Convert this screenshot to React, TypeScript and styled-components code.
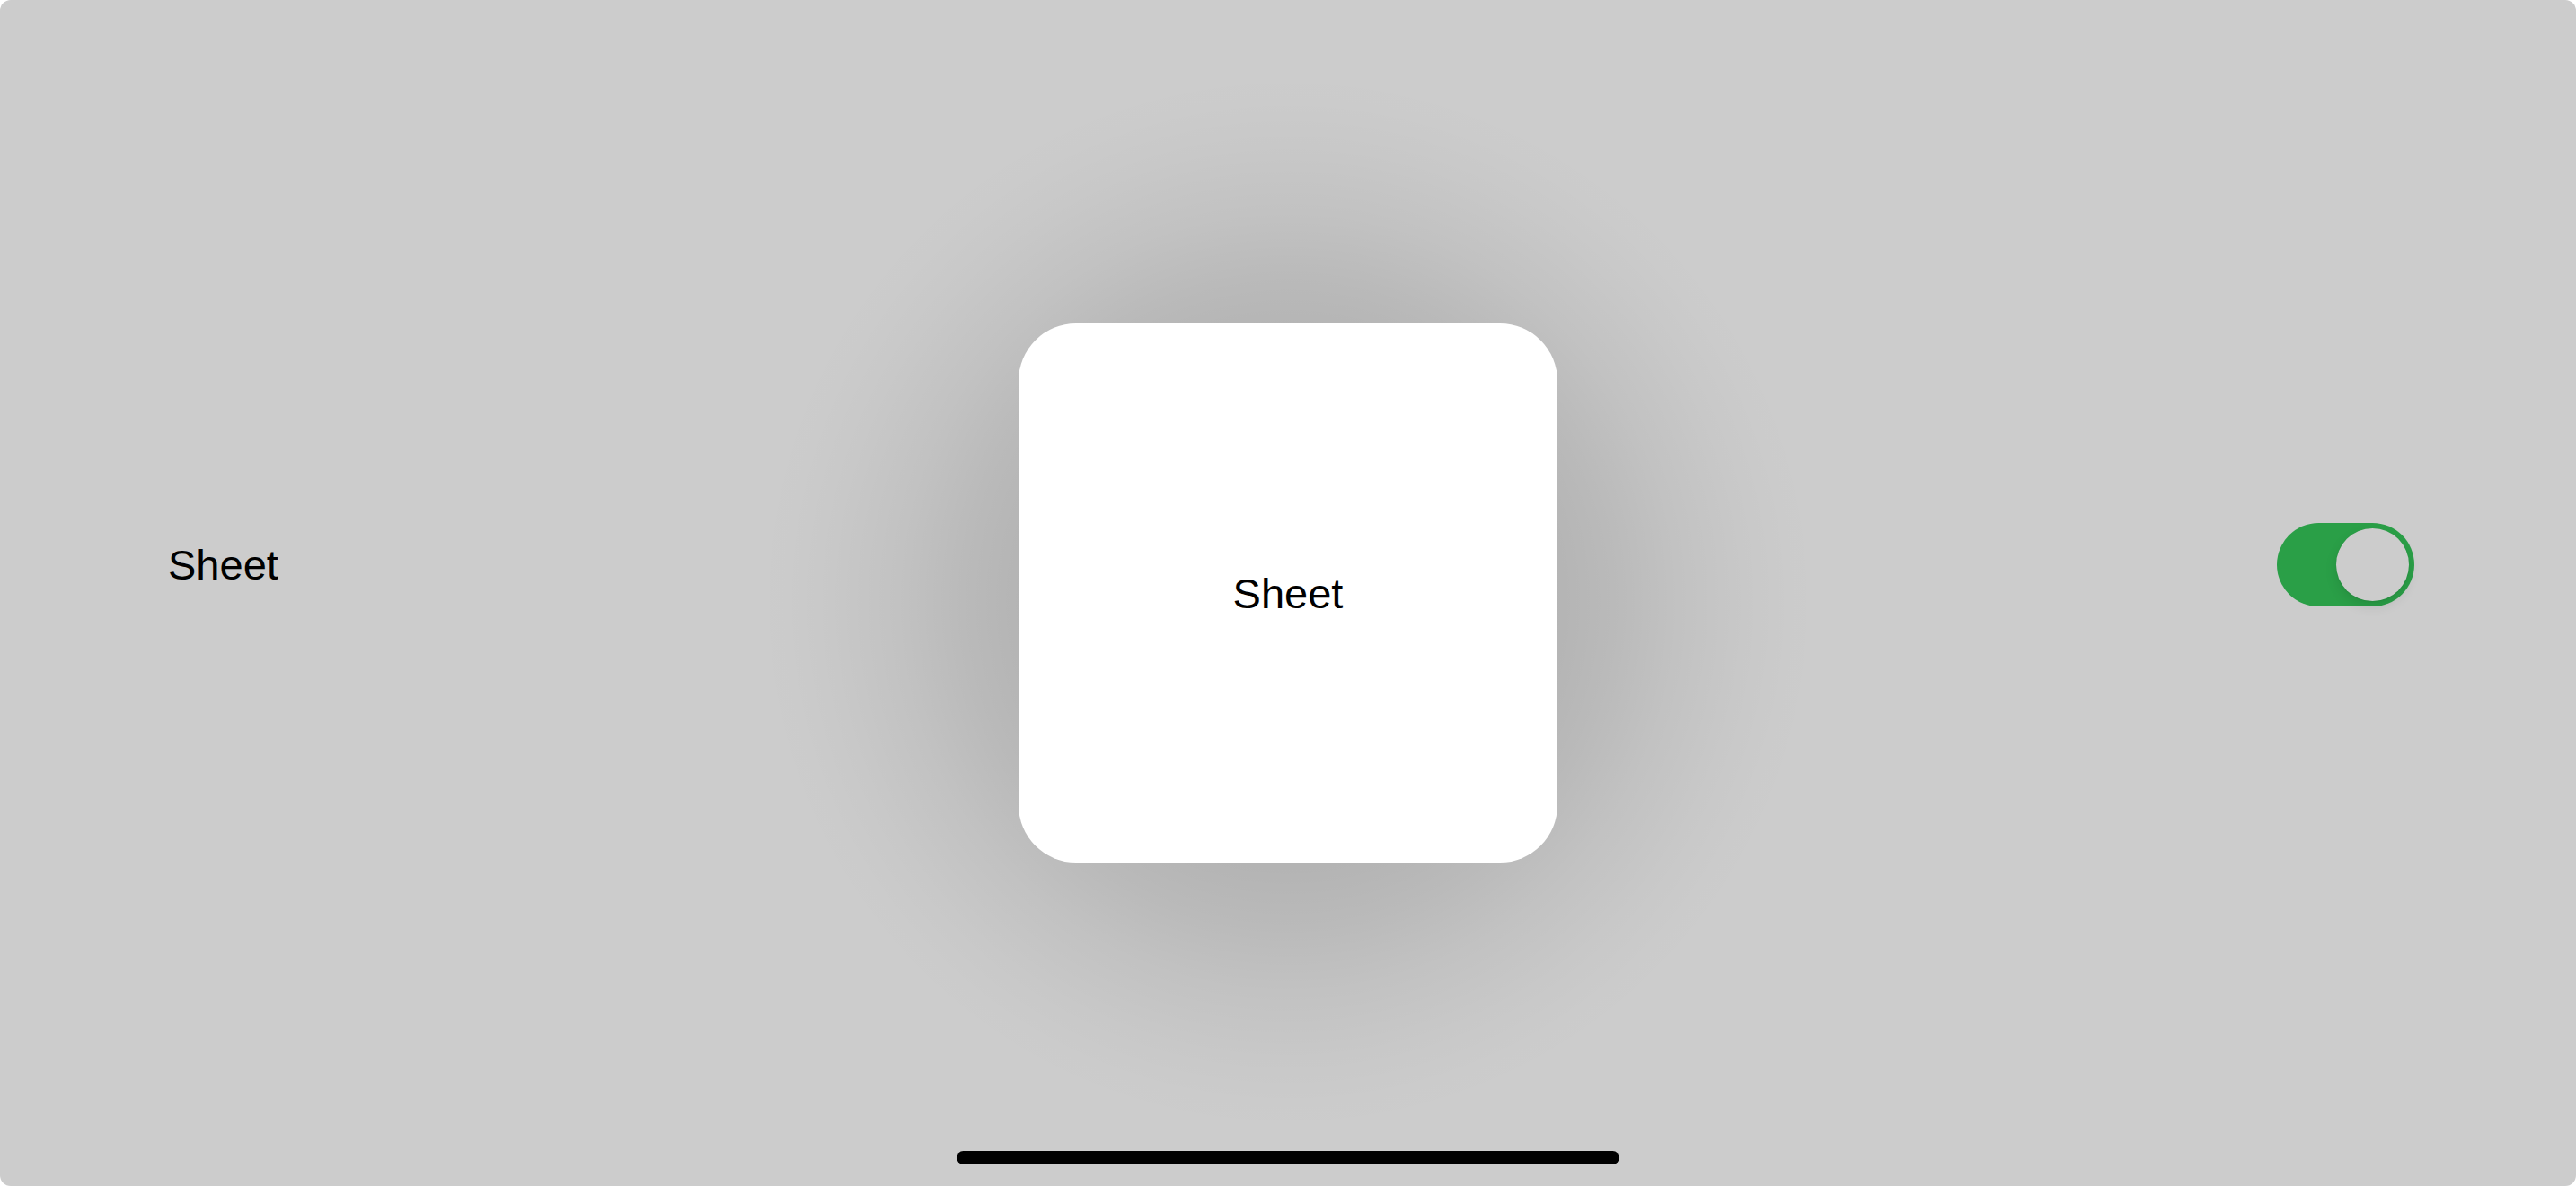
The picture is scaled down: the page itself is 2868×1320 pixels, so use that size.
import styled, { createGlobalStyle } from "styled-components";

const GlobalStyle = createGlobalStyle`
  html, body {
    margin: 0;
    padding: 0;
    background: #ffffff;
  }
  body {
    font-family: "Liberation Sans", Arial, sans-serif;
    -webkit-font-smoothing: antialiased;
  }
`;

export default function App() {
  return (
    <>
      <GlobalStyle />
      <Screen>
        <Content>
          <Row>
            <Label>Sheet</Label>
            <Toggle aria-checked="true" role="switch">
              <Knob />
            </Toggle>
          </Row>
        </Content>

        <SheetShadow />
        <Sheet>
          <Label>Sheet</Label>
        </Sheet>

        <HomeIndicator />
      </Screen>
    </>
  );
}

const Screen = styled.div`
  position: relative;
  isolation: isolate;
  width: 100vw;
  height: 100vh;
  background: #cccccc;
  border-radius: 12px;
  overflow: hidden;
`;

const Content = styled.div`
  display: flex;
  flex-direction: column;
  padding-top: 582px;
`;

const Row = styled.div`
  display: flex;
  align-items: center;
  justify-content: space-between;
  height: 93px;
  padding: 0 180px 0 187px;
`;

const Label = styled.span`
  font-size: 47px;
  line-height: 47px;
  color: #000000;
`;

const Toggle = styled.div`
  position: relative;
  width: 153px;
  height: 93px;
  border-radius: 47px;
  background: #2a9f47;
`;

const Knob = styled.div`
  position: absolute;
  top: 6px;
  right: 6px;
  width: 81px;
  height: 81px;
  border-radius: 50%;
  background: #cccccc;
  box-shadow: 0 6px 14px rgba(0, 0, 0, 0.1), 0 1px 2px rgba(0, 0, 0, 0.06);
`;

/* soft shadow blob behind the sheet, drawn as a gradient so it stays smooth */
const SheetShadow = styled.div`
  position: absolute;
  left: calc(50% - 600px);
  top: calc(50% - 590px);
  width: 1200px;
  height: 1200px;
  pointer-events: none;
  background: radial-gradient(
    ellipse farthest-side at 50% 50%,
    rgba(0, 0, 0, 0.12) 0%,
    rgba(0, 0, 0, 0.12) 48%,
    rgba(0, 0, 0, 0.09) 60%,
    rgba(0, 0, 0, 0.05) 72%,
    rgba(0, 0, 0, 0.02) 85%,
    rgba(0, 0, 0, 0.005) 94%,
    rgba(0, 0, 0, 0) 100%
  );
`;

const Sheet = styled.div`
  position: absolute;
  left: 50%;
  top: 50%;
  width: 600px;
  height: 600px;
  margin: -300px 0 0 -300px;
  background: #ffffff;
  border-radius: 64px;
  display: flex;
  align-items: center;
  justify-content: center;
`;

const HomeIndicator = styled.div`
  position: absolute;
  left: 1065px;
  bottom: 24px;
  width: 738px;
  height: 15px;
  border-radius: 8px;
  background: #000000;
`;
